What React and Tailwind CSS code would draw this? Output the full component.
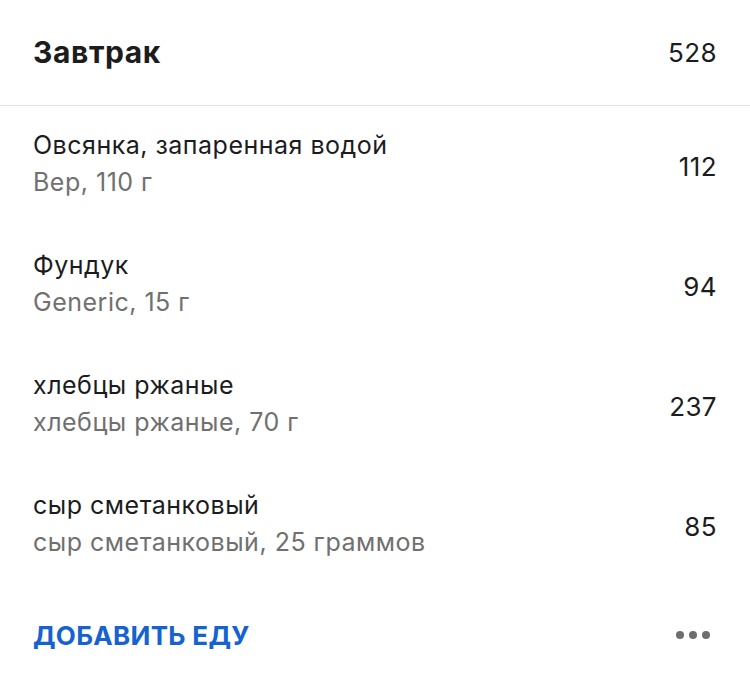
const items = [
  { name: 'Овсянка, запаренная водой', detail: 'Вер, 110 г', kcal: 112 },
  { name: 'Фундук', detail: 'Generic, 15 г', kcal: 94 },
  { name: 'хлебцы ржаные', detail: 'хлебцы ржаные, 70 г', kcal: 237 },
  { name: 'сыр сметанковый', detail: 'сыр сметанковый, 25 граммов', kcal: 85 },
];

export default function App() {
  return (
    <div className="w-[750px] h-[678px] bg-white text-[#1c1c1e] font-['Inter',sans-serif]">
      <div className="h-[106px] flex items-center justify-between pl-[33px] pr-[33px] border-b border-[#e3e3e3]">
        <h2 className="text-[30px] font-bold tracking-[0.6px]">Завтрак</h2>
        <span className="text-[26px] tracking-[0.4px]">528</span>
      </div>

      {items.map((item) => (
        <div key={item.name} className="h-[120px] flex items-center justify-between pl-[33px] pr-[33px]">
          <div className="leading-[37px] text-[25px] tracking-[0.5px] -mt-[4px]">
            <div>{item.name}</div>
            <div className="text-[#707070]">{item.detail}</div>
          </div>
          <span className="text-[26px] tracking-[0.4px]">{item.kcal}</span>
        </div>
      ))}

      <div className="h-[98px] flex items-center justify-between pl-[33px] pr-[40px]">
        <button type="button" className="text-[26px] font-bold tracking-[0.3px] text-[#1662d0]">ДОБАВИТЬ ЕДУ</button>
        <div className="flex gap-[5px]">
          <span className="w-[8px] h-[8px] rounded-full bg-[#6e6e6e]" />
          <span className="w-[8px] h-[8px] rounded-full bg-[#6e6e6e]" />
          <span className="w-[8px] h-[8px] rounded-full bg-[#6e6e6e]" />
        </div>
      </div>
    </div>
  );
}
